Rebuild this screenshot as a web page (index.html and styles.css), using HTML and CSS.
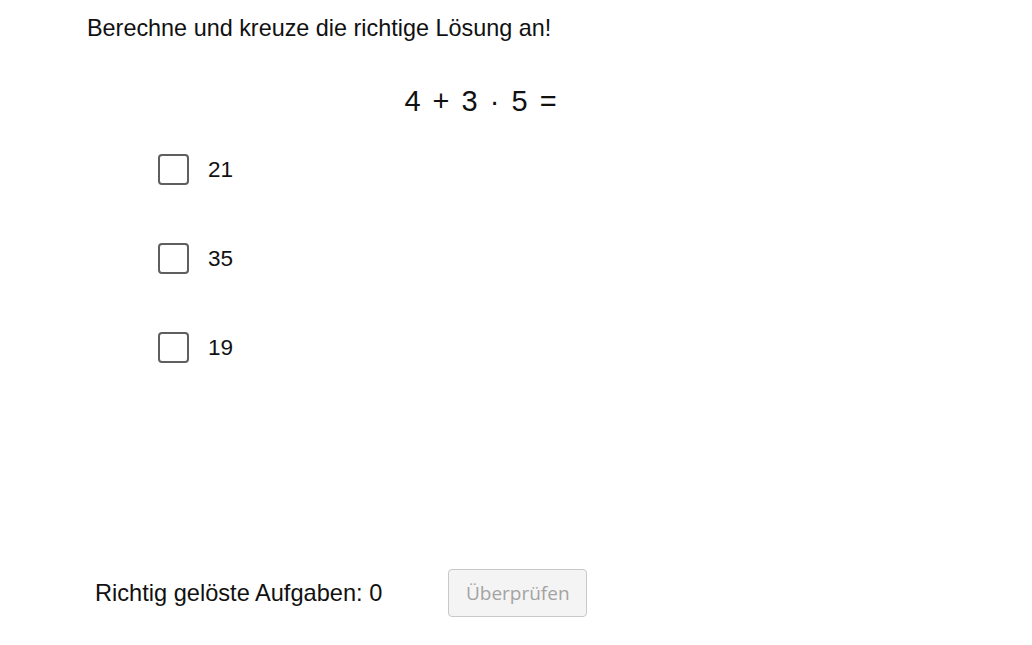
FILE: index.html
```html
<!DOCTYPE html>
<html lang="de">
<head>
<meta charset="UTF-8">
<meta name="viewport" content="width=device-width, initial-scale=1.0">
<title>Rechenaufgabe</title>
<link rel="stylesheet" href="styles.css">
</head>
<body>

<div class="sheet">
    <p class="task">Berechne und kreuze die richtige Lösung an!</p>
    <div class="term">4 <span class="op">+</span> 3 <span class="op">·</span> 5 <span class="op">=</span></div>

    <form id="quizForm" class="choices">
        <label class="choice"><input type="checkbox" name="a" value="21"><span class="box"></span> 21</label>
        <label class="choice"><input type="checkbox" name="a" value="35"><span class="box"></span> 35</label>
        <label class="choice"><input type="checkbox" name="a" value="19"><span class="box"></span> 19</label>
    </form>

    <div class="footer">
        <span class="score">Richtig gelöste Aufgaben: <span id="count">0</span></span>
        <button type="button" class="check" disabled>Überprüfen</button>
    </div>
</div>

</body>
</html>
```

FILE: styles.css
```css
body {
    font-family: "Liberation Sans", Arial, sans-serif;
    margin: 0;
    padding: 0;
    background: #fff;
    color: #111;
}
.sheet {
    width: 965px;
    padding-top: 14px;
}
.task {
    margin: 0 0 0 87px;
    font-size: 23.4px;
    line-height: 28px;
}
.term {
    margin-top: 41px;
    text-align: center;
    font-size: 29px;
    line-height: 36px;
}
.term .op {
    margin: 0 4px;
}
.choices {
    margin: 35px 0 0 158px;
    display: flex;
    flex-direction: column;
    gap: 58px;
}
.choice {
    display: flex;
    align-items: center;
    gap: 19px;
    font-size: 22.5px;
    height: 31px;
}
.choice input {
    display: none;
}
.box {
    box-sizing: border-box;
    width: 31px;
    height: 31px;
    border: 2px solid #5f5f5f;
    border-radius: 4px;
}
.footer {
    margin: 206px 0 0 95px;
    display: flex;
    align-items: center;
    gap: 66px;
}
.score {
    font-size: 23.6px;
}
.check {
    font-family: "Open Sans", sans-serif;
    font-size: 19px;
    color: #a3a3a3;
    background: #f4f4f4;
    border: 1px solid #c8c8c8;
    border-radius: 4px;
    width: 139px;
    height: 48px;
}
```
